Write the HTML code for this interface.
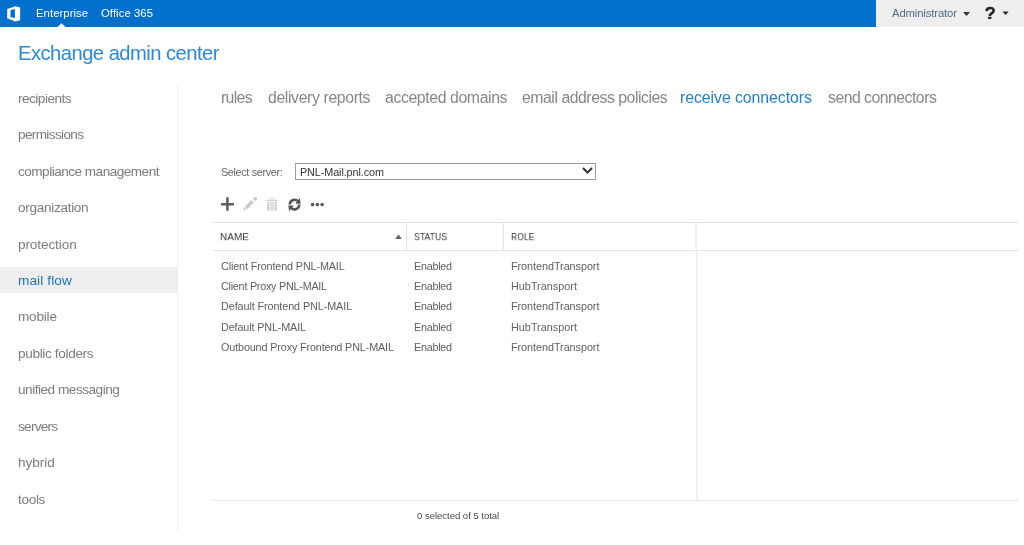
<!DOCTYPE html>
<html><head><meta charset="utf-8">
<style>
*{margin:0;padding:0;box-sizing:border-box}
html,body{width:1024px;height:545px;overflow:hidden;background:#fff;font-family:"Liberation Sans",sans-serif}
.a{position:absolute;white-space:nowrap;line-height:1;will-change:transform}
.tb{color:#fff;font-size:11.3px}
.nav{color:#7c7c7c;font-size:13.6px;left:18px}
.tab{color:#868686;font-size:15.8px;top:89.5px}
.hd{color:#3a3a3a;font-size:10px;top:232.6px;transform-origin:0 0}
.cell{color:#606060;font-size:10.8px}
.ln{position:absolute;background:#dfe3e6}
</style></head><body>
<div style="position:absolute;left:0;top:0;width:876px;height:27px;background:#0070cc"></div>
<div style="position:absolute;left:876px;top:0;width:148px;height:27px;background:#eeeeee"></div>
<svg class="a" style="left:0;top:0" width="27" height="27" viewBox="0 0 27 27">
<path d="M7.2 9 L15.6 6.2 L20.15 7.4 L20.15 20.2 L15.4 21.4 L7.2 18.2 Z M10.5 10.3 L14.9 9.0 L14.9 17.9 L10.5 17.1 Z" fill="#fff" fill-rule="evenodd"/>
</svg>
<div class="a tb" style="left:36px;top:8px;letter-spacing:0.067px">Enterprise</div>
<div class="a tb" style="left:101px;top:8px;letter-spacing:0.078px">Office 365</div>
<svg class="a" style="left:57px;top:23px" width="9" height="4" viewBox="0 0 9 4"><path d="M0.5 4 L4.5 0.3 L8.5 4Z" fill="#fff"/></svg>
<div class="a" style="left:891.5px;top:8px;font-size:11.3px;letter-spacing:-0.133px;color:#4f6b87">Administrator</div>
<svg class="a" style="left:963px;top:11.5px" width="7" height="4" viewBox="0 0 7 4"><path d="M0 0H7L3.5 4Z" fill="#333"/></svg>
<svg class="a" style="left:980px;top:4px" width="20" height="18" viewBox="0 0 20 18"><path d="M6.6 7.1 C6.7 4.8, 8.6 4.0, 10.2 4.0 C12.2 4.0, 13.6 5.1, 13.6 6.8 C13.6 8.4, 12.2 9.0, 11.0 9.8 C10.2 10.3, 9.9 10.8, 9.9 11.3 V11.9" fill="none" stroke="#2a2a2a" stroke-width="2.7"/><rect x="8.0" y="12.8" width="3.4" height="2.2" rx="0.5" fill="#2a2a2a"/></svg>
<svg class="a" style="left:1002px;top:11px" width="8" height="5" viewBox="0 0 8 5"><path d="M0.5 0.4H6.7L3.6 4.1Z" fill="#2a2a2a"/></svg>
<div class="a" style="left:18px;top:42.5px;font-size:20.2px;letter-spacing:-0.53px;color:#2b89d8">Exchange admin center</div>
<div style="position:absolute;left:0;top:266.5px;width:176.5px;height:26.2px;background:#eeeeee"></div>
<div style="position:absolute;left:177px;top:85px;width:1px;height:446px;background:#efefef"></div>
<div class="a nav" style="top:91.70px;letter-spacing:-0.511px">recipients</div>
<div class="a nav" style="top:128.15px;letter-spacing:-0.65px">permissions</div>
<div class="a nav" style="top:164.60px;letter-spacing:-0.52px">compliance management</div>
<div class="a nav" style="top:201.05px;letter-spacing:-0.309px">organization</div>
<div class="a nav" style="top:237.50px;letter-spacing:-0.111px">protection</div>
<div class="a nav" style="top:273.95px;letter-spacing:0.112px;color:#1a72c0">mail flow</div>
<div class="a nav" style="top:310.40px;letter-spacing:-0.22px">mobile</div>
<div class="a nav" style="top:346.85px;letter-spacing:-0.346px">public folders</div>
<div class="a nav" style="top:383.30px;letter-spacing:-0.481px">unified messaging</div>
<div class="a nav" style="top:419.75px;letter-spacing:-0.733px">servers</div>
<div class="a nav" style="top:456.20px;letter-spacing:-0.04px">hybrid</div>
<div class="a nav" style="top:492.65px;letter-spacing:-0.325px">tools</div>
<div class="a tab" style="left:220.6px;letter-spacing:-0.675px">rules</div>
<div class="a tab" style="left:267.5px;letter-spacing:-0.37px">delivery reports</div>
<div class="a tab" style="left:384.5px;letter-spacing:-0.383px">accepted domains</div>
<div class="a tab" style="left:521.5px;letter-spacing:-0.46px">email address policies</div>
<div class="a tab" style="left:680.0px;letter-spacing:-0.04px;color:#1f7fd2">receive connectors</div>
<div class="a tab" style="left:827.5px;letter-spacing:-0.51px">send connectors</div>
<div class="a" style="left:220.5px;top:166.5px;font-size:10.8px;color:#666;letter-spacing:-0.33px">Select server:</div>
<div style="position:absolute;left:295px;top:163px;width:301px;height:17px;border:1px solid #9c9c9c;background:#fff"></div>
<div class="a" style="left:299.5px;top:166.5px;font-size:10.8px;color:#333;letter-spacing:-0.087px">PNL-Mail.pnl.com</div>
<svg class="a" style="left:582px;top:167px" width="11" height="7" viewBox="0 0 11 7"><path d="M1 1 L5.5 5.5 L10 1" stroke="#333" stroke-width="2" fill="none"/></svg>
<svg class="a" style="left:220px;top:196px" width="110" height="17" viewBox="0 0 110 17">
<path d="M1 8.2H14M7.4 1.2V14.8" stroke="#606060" stroke-width="2.6" fill="none"/>
<path d="M26.05 11.9 L32.65 5.3" stroke="#c9c9c9" stroke-width="3.5" fill="none"/>
<circle cx="35.2" cy="2.95" r="1.85" fill="#c9c9c9"/>
<path d="M26.64 13.79 L24.16 11.31 L23.1 14.85Z" fill="#cdcdcd"/>
<path d="M50.3 2.5H53.7M46.2 4.4H57.6" stroke="#cfcfcf" stroke-width="1.2" fill="none"/>
<path d="M47 5.8H56.9V14.6H47Z" fill="#d6d6d6"/>
<path d="M49.7 6.5V14M52 6.5V14M54.3 6.5V14" stroke="#fff" stroke-width="0.8"/>
<g fill="none" stroke="#555" stroke-width="2.5">
<path d="M69.75 8.6 A4.75 4.75 0 0 1 78.61 6.23"/>
<path d="M79.25 8.6 A4.75 4.75 0 0 1 70.39 10.97"/>
</g>
<path d="M79.78 2.04 L80.7 7.72 L75.38 7.72Z" fill="#555"/>
<path d="M69.22 15.16 L68.3 9.48 L73.62 9.48Z" fill="#555"/>
<ellipse cx="92.6" cy="8.5" rx="1.7" ry="1.85" fill="#555"/>
<ellipse cx="97.4" cy="8.5" rx="1.7" ry="1.85" fill="#555"/>
<ellipse cx="102.1" cy="8.5" rx="1.7" ry="1.85" fill="#555"/>
</svg>
<div class="ln" style="left:213px;top:222px;width:805px;height:1px"></div>
<div class="ln" style="left:213px;top:250px;width:805px;height:1px"></div>
<div class="ln" style="left:213px;top:500px;width:805px;height:1px"></div>
<div class="ln" style="left:406px;top:223px;width:1px;height:27px"></div>
<div class="ln" style="left:503px;top:223px;width:1px;height:27px"></div>
<div class="ln" style="left:695px;top:223px;width:2px;height:27px;background:#f0f0f0"></div>
<div class="ln" style="left:696px;top:251px;width:2px;height:249px;background:#edf0f2"></div>
<div class="a hd" style="left:220.3px;letter-spacing:0px;transform:scale(1,0.9)">NAME</div>
<svg class="a" style="left:395px;top:234px" width="7" height="5" viewBox="0 0 7 5"><path d="M0.2 5 L3.5 0.2 L6.8 5Z" fill="#666"/></svg>
<div class="a hd" style="left:414px;transform:scale(0.875,0.9)">STATUS</div>
<div class="a hd" style="left:510.5px;transform:scale(0.86,0.9)">ROLE</div>
<div class="a cell" style="left:220.5px;top:260.6px;letter-spacing:-0.126px">Client Frontend PNL-MAIL</div>
<div class="a cell" style="left:413.5px;top:260.6px;letter-spacing:-0.25px">Enabled</div>
<div class="a cell" style="left:510.5px;top:260.6px;letter-spacing:-0.037px">FrontendTransport</div>
<div class="a cell" style="left:220.5px;top:280.9px;letter-spacing:-0.245px">Client Proxy PNL-MAIL</div>
<div class="a cell" style="left:413.5px;top:280.9px;letter-spacing:-0.25px">Enabled</div>
<div class="a cell" style="left:510.5px;top:280.9px;letter-spacing:0.027px">HubTransport</div>
<div class="a cell" style="left:220.5px;top:301.2px;letter-spacing:-0.087px">Default Frontend PNL-MAIL</div>
<div class="a cell" style="left:413.5px;top:301.2px;letter-spacing:-0.25px">Enabled</div>
<div class="a cell" style="left:510.5px;top:301.2px;letter-spacing:-0.037px">FrontendTransport</div>
<div class="a cell" style="left:220.5px;top:321.5px;letter-spacing:-0.133px">Default PNL-MAIL</div>
<div class="a cell" style="left:413.5px;top:321.5px;letter-spacing:-0.25px">Enabled</div>
<div class="a cell" style="left:510.5px;top:321.5px;letter-spacing:0.027px">HubTransport</div>
<div class="a cell" style="left:220.5px;top:341.8px;letter-spacing:-0.132px">Outbound Proxy Frontend PNL-MAIL</div>
<div class="a cell" style="left:413.5px;top:341.8px;letter-spacing:-0.25px">Enabled</div>
<div class="a cell" style="left:510.5px;top:341.8px;letter-spacing:-0.037px">FrontendTransport</div>
<div class="a" style="left:417px;top:511px;font-size:9.6px;letter-spacing:-0.05px;color:#4a4a4a">0 selected of 5 total</div>
</body></html>
